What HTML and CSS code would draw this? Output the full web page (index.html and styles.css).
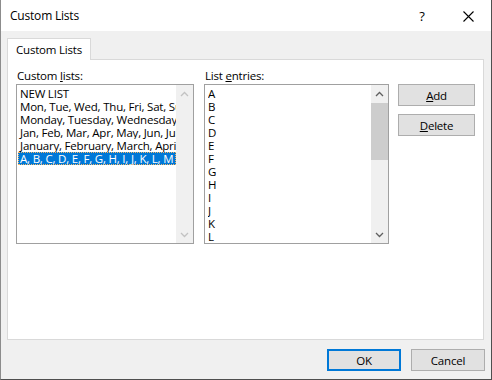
FILE: index.html
```html
<!DOCTYPE html>
<html lang="en">
<head>
    <meta charset="UTF-8">
    <title>Custom Lists</title>
    <link rel="stylesheet" href="styles.css">
</head>
<body>
<div class="dialog">

    <!-- title bar -->
    <div class="title-bar">
        <span class="title">Custom Lists</span>
        <span class="help-btn">?</span>
        <span class="close-btn">
            <svg width="11" height="11" viewBox="0 0 11 11"><path d="M0.5 0.5 L10.5 10.5 M10.5 0.5 L0.5 10.5" stroke="#000" stroke-width="1.1" fill="none"/></svg>
        </span>
    </div>

    <div class="dialog-body">
        <div class="tab-row">
            <div class="tab">Custom Lists</div>
        </div>

        <div class="tab-page">
            <!-- custom lists column -->
            <div class="col col-lists">
                <div class="field-label">Custom <u>l</u>ists:</div>
                <div class="listbox">
                    <div class="list-items">
                        <div class="item">NEW LIST</div>
                        <div class="item">Mon, Tue, Wed, Thu, Fri, Sat, Sun</div>
                        <div class="item">Monday, Tuesday, Wednesday, Thursday</div>
                        <div class="item">Jan, Feb, Mar, Apr, May, Jun, Jul</div>
                        <div class="item">January, February, March, April</div>
                        <div class="item selected">A, B, C, D, E, F, G, H, I, J, K, L, M</div>
                    </div>
                    <div class="scrollbar disabled">
                        <div class="arrow"><svg width="9" height="6" viewBox="0 0 9 6"><path d="M1 5 L4.5 1.5 L8 5" stroke="#c2c2c2" stroke-width="1.3" fill="none"/></svg></div>
                        <div class="track"></div>
                        <div class="arrow"><svg width="9" height="6" viewBox="0 0 9 6"><path d="M1 1 L4.5 4.5 L8 1" stroke="#c2c2c2" stroke-width="1.3" fill="none"/></svg></div>
                    </div>
                </div>
            </div>

            <!-- list entries column -->
            <div class="col col-entries">
                <div class="field-label">List <u>e</u>ntries:</div>
                <div class="listbox">
                    <div class="list-items entries">
                        <div class="item">A</div>
                        <div class="item">B</div>
                        <div class="item">C</div>
                        <div class="item">D</div>
                        <div class="item">E</div>
                        <div class="item">F</div>
                        <div class="item">G</div>
                        <div class="item">H</div>
                        <div class="item">I</div>
                        <div class="item">J</div>
                        <div class="item">K</div>
                        <div class="item">L</div>
                    </div>
                    <div class="scrollbar">
                        <div class="arrow"><svg width="9" height="6" viewBox="0 0 9 6"><path d="M1 5 L4.5 1.5 L8 5" stroke="#606060" stroke-width="1.3" fill="none"/></svg></div>
                        <div class="track"><div class="thumb"></div></div>
                        <div class="arrow"><svg width="9" height="6" viewBox="0 0 9 6"><path d="M1 1 L4.5 4.5 L8 1" stroke="#606060" stroke-width="1.3" fill="none"/></svg></div>
                    </div>
                </div>
            </div>

            <!-- side buttons -->
            <div class="col col-buttons">
                <button class="btn"><u>A</u>dd</button>
                <button class="btn"><u>D</u>elete</button>
            </div>
        </div>

        <div class="footer">
            <button class="btn btn-default">OK</button>
            <button class="btn">Cancel</button>
        </div>
    </div>
</div>
</body>
</html>
```

FILE: styles.css
```css
/* page */
body {
    margin: 0;
    padding: 0;
    background: #ffffff;
    font-family: 'Open Sans', 'Noto Sans', sans-serif;
    font-size: 11.5px;
    letter-spacing: -0.2px;
    color: #000;
}

/* dialog frame */
.dialog {
    width: 492px;
    height: 380px;
    box-sizing: border-box;
    border-left: 1px solid #8c8c8c;
    border-right: 1px solid #4f4f4f;
    border-bottom: 1px solid #4f4f4f;
    display: flex;
    flex-direction: column;
}

/* title bar */
.title-bar {
    height: 31px;
    flex: none;
    display: flex;
    align-items: center;
    background: #ffffff;
    padding-left: 9px;
}

.title {
    font-size: 12px;
    flex: 1;
}

.help-btn {
    font-size: 13px;
    width: 46px;
    text-align: center;
}

.close-btn {
    width: 46px;
    display: flex;
    justify-content: center;
    align-items: center;
    padding-top: 1px;
}

/* body */
.dialog-body {
    flex: 1;
    background: #f0f0f0;
    display: flex;
    flex-direction: column;
    padding: 7px 7px 0 6px;
}

.tab-row {
    display: flex;
    height: 21px;
}

.tab {
    position: relative;
    z-index: 1;
    width: 84px;
    height: 22px;
    box-sizing: border-box;
    border: 1px solid #d9d9d9;
    border-bottom: none;
    background: #ffffff;
    padding-left: 8px;
    line-height: 22px;
}

.tab-page {
    height: 281px;
    box-sizing: border-box;
    border: 1px solid #d9d9d9;
    background: #ffffff;
    display: flex;
    padding: 9px 0 0 8px;
}

.col {
    display: flex;
    flex-direction: column;
}

.col-lists {
    width: 178px;
}

.col-entries {
    width: 185px;
    margin-left: 10px;
}

.col-buttons {
    width: 77px;
    margin-left: 9px;
    padding-top: 15px;
    gap: 8px;
}

.field-label {
    height: 15px;
    line-height: 14px;
    padding-left: 1px;
}

/* list boxes */
.listbox {
    height: 160px;
    box-sizing: border-box;
    border: 1px solid #a0a0a0;
    display: flex;
    overflow: hidden;
}

.list-items {
    flex: 1;
    min-width: 0;
    padding: 2px 0 0 1px;
}

.entries {
    padding-left: 3px;
}

.item {
    height: 13px;
    line-height: 13px;
    white-space: nowrap;
    overflow: hidden;
    padding-left: 2px;
}

.entries .item {
    padding-left: 0;
}

.item.selected {
    background: #0078d7;
    color: #ffffff;
    outline: 1px dotted #f5b868;
    outline-offset: -1px;
}

/* scroll bars */
.scrollbar {
    width: 17px;
    flex: none;
    background: #f0f0f0;
    display: flex;
    flex-direction: column;
}

.arrow {
    height: 17px;
    display: flex;
    justify-content: center;
    align-items: center;
}

.track {
    flex: 1;
}

.thumb {
    height: 57px;
    margin-top: 1px;
    background: #cdcdcd;
}

/* buttons */
.btn {
    height: 22px;
    box-sizing: border-box;
    border: 1px solid #adadad;
    background: #e1e1e1;
    font-family: inherit;
    font-size: 11.5px;
    letter-spacing: inherit;
    color: #000;
    padding: 0;
}

.footer {
    display: flex;
    justify-content: flex-end;
    gap: 10px;
    padding-top: 9px;
    margin-right: -1px;
}

.footer .btn {
    width: 74px;
}

.btn-default {
    border: 2px solid #0078d7;
}
```
